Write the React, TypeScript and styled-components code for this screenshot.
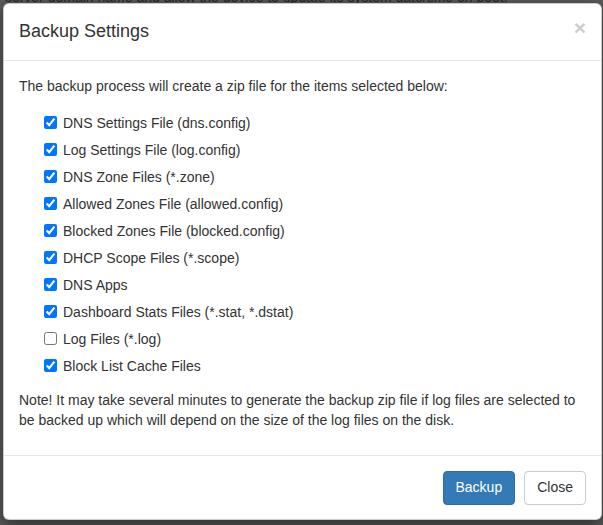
import React from "react";
import styled, { createGlobalStyle } from "styled-components";

const GlobalStyle = createGlobalStyle`
  html, body {
    margin: 0;
    padding: 0;
    width: 603px;
    height: 525px;
    overflow: hidden;
    background: #5a5a5a;
    font-family: "Liberation Sans", Arial, sans-serif;
    font-size: 14px;
    color: #333;
  }
  * {
    box-sizing: border-box;
  }
`;

const Page = styled.div`
  position: relative;
  width: 603px;
  height: 525px;
  overflow: hidden;
  background: #5a5a5a;
`;

const PageText = styled.div`
  position: absolute;
  left: -6px;
  top: -13px;
  color: #262626;
  font-size: 14px;
  line-height: 20px;
  white-space: nowrap;
`;

const Modal = styled.div`
  position: absolute;
  left: 3px;
  top: 3px;
  width: 599px;
  height: 517px;
  background: #fff;
  border: 1px solid rgba(0, 0, 0, 0.2);
  border-radius: 6px;
  box-shadow: 0 5px 15px rgba(0, 0, 0, 0.5);
  display: flex;
  flex-direction: column;
  overflow: hidden;
`;

const Header = styled.div`
  display: flex;
  align-items: flex-start;
  justify-content: space-between;
  padding: 15px;
  border-bottom: 1px solid #e5e5e5;
`;

const Title = styled.h4`
  margin: 0;
  font-size: 18px;
  font-weight: 500;
  line-height: 1.42857;
  color: #333;
`;

const CloseX = styled.button`
  border: 0;
  background: transparent;
  padding: 0;
  margin-top: -2px;
  font-family: "Liberation Sans", Arial, sans-serif;
  font-size: 21px;
  font-weight: 700;
  line-height: 1;
  color: #000;
  opacity: 0.2;
  cursor: pointer;
`;

const Body = styled.div`
  padding: 15px;
`;

const Para = styled.p<{ $gap?: number }>`
  margin: 0 0 ${(p) => p.$gap ?? 10}px;
  line-height: 20px;
`;

const List = styled.div`
  display: flex;
  flex-direction: column;
  gap: 7px;
  padding-left: 25px;
  margin: 17px 0 14px;
`;

const Row = styled.label`
  display: flex;
  align-items: center;
  gap: 6px;
  height: 20px;
  line-height: 20px;
  cursor: pointer;
`;

const Box = styled.input`
  width: 13px;
  height: 13px;
  margin: 0;
  accent-color: #0075ff;
`;

const Footer = styled.div`
  display: flex;
  justify-content: flex-end;
  gap: 9px;
  padding: 15px;
  border-top: 1px solid #e5e5e5;
`;

const Button = styled.button<{ $primary?: boolean }>`
  font-family: "Liberation Sans", Arial, sans-serif;
  font-size: 14px;
  line-height: 1.42857;
  padding: 6px 12px;
  border-radius: 4px;
  border: 1px solid ${(p) => (p.$primary ? "#2e6da4" : "#ccc")};
  background: ${(p) => (p.$primary ? "#337ab7" : "#fff")};
  color: ${(p) => (p.$primary ? "#fff" : "#333")};
  cursor: pointer;
`;

const items: { label: string; checked: boolean }[] = [
  { label: "DNS Settings File (dns.config)", checked: true },
  { label: "Log Settings File (log.config)", checked: true },
  { label: "DNS Zone Files (*.zone)", checked: true },
  { label: "Allowed Zones File (allowed.config)", checked: true },
  { label: "Blocked Zones File (blocked.config)", checked: true },
  { label: "DHCP Scope Files (*.scope)", checked: true },
  { label: "DNS Apps", checked: true },
  { label: "Dashboard Stats Files (*.stat, *.dstat)", checked: true },
  { label: "Log Files (*.log)", checked: false },
  { label: "Block List Cache Files", checked: true },
];

export default function App() {
  return (
    <Page>
      <GlobalStyle />
      <PageText>
        y server domain name and allow the device to update its system date/time on boot.
      </PageText>
      <Modal>
        <Header>
          <Title>Backup Settings</Title>
          <CloseX aria-label="Close">×</CloseX>
        </Header>
        <Body>
          <Para $gap={0}>
            The backup process will create a zip file for the items selected below:
          </Para>
          <List>
            {items.map(({ label, checked }) => (
              <Row key={label}>
                <Box type="checkbox" defaultChecked={checked} />
                {label}
              </Row>
            ))}
          </List>
          <Para>
            Note! It may take several minutes to generate the backup zip file if log files are
            selected to be backed up which will depend on the size of the log files on the disk.
          </Para>
        </Body>
        <Footer>
          <Button $primary>Backup</Button>
          <Button>Close</Button>
        </Footer>
      </Modal>
    </Page>
  );
}
